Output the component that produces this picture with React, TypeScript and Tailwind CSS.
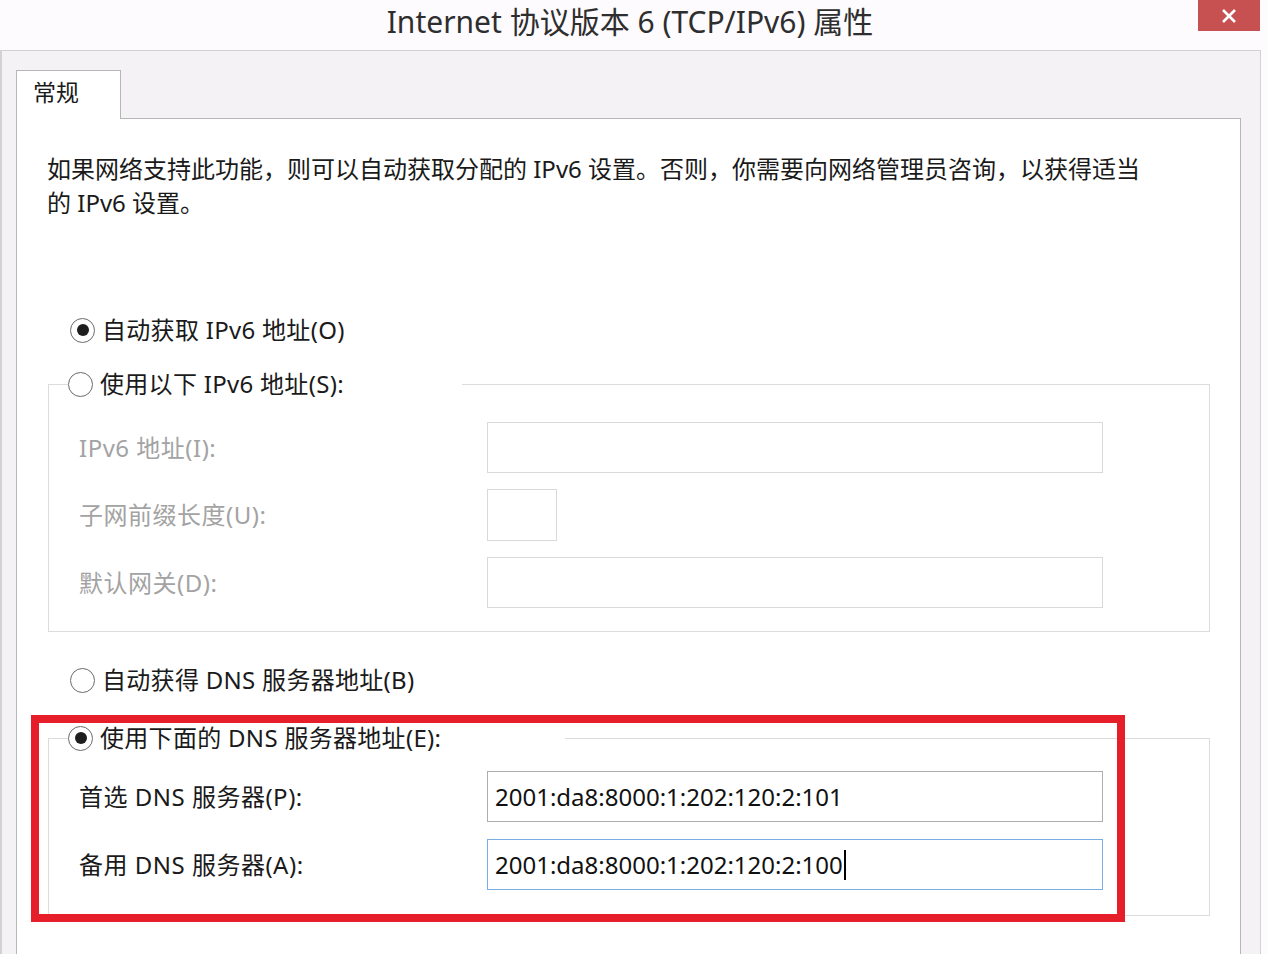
import React from 'react'

const FONT = { fontFamily: '"Noto Sans", "Noto Sans CJK SC", sans-serif' }

function Radio({ checked }: { checked?: boolean }) {
  return (
    <span className="w-[25px] h-[25px] rounded-full border-[1.5px] border-[#6b6b6b] bg-white flex items-center justify-center shrink-0">
      {checked && <span className="w-[12px] h-[12px] rounded-full bg-[#1e1e1e]" />}
    </span>
  )
}

function RadioRow({ label, checked }: { label: string; checked?: boolean }) {
  return (
    <div className="flex items-center gap-[7px] h-[34px] text-[24px] tracking-[0.3px] text-[#1a1a1a]">
      <Radio checked={checked} />
      <span className="leading-none">{label}</span>
    </div>
  )
}

function FieldRow({
  label,
  disabled,
  inputClass,
  value,
  caret,
}: {
  label: string
  disabled?: boolean
  inputClass: string
  value?: string
  caret?: boolean
}) {
  return (
    <div className="flex items-center">
      <div
        className={`w-[438px] pl-[30px] text-[24px] tracking-[0.5px] ${disabled ? 'text-[#a3a3a3]' : 'text-[#1a1a1a]'}`}
      >
        {label}
      </div>
      <div className={`h-[51px] bg-white border flex items-center pl-[7px] text-[24px] text-[#111] ${inputClass}`}>
        {value}
        {caret && <span className="inline-block w-[2px] h-[30px] bg-black ml-[1px]" />}
      </div>
    </div>
  )
}

export default function App() {
  return (
    <div className="relative w-[1268px] h-[954px] overflow-hidden bg-[#fdfbfd]" style={FONT}>
      {/* title bar */}
      <div className="relative w-[1260px] h-[50px] flex items-center justify-center">
        <span className="text-[30px] text-[#2e2e2e] pb-[8px]">Internet 协议版本 6 (TCP/IPv6) 属性</span>
        <div className="absolute top-0 right-0 w-[62px] h-[31px] bg-[#c75050] flex items-center justify-center">
          <svg width="16" height="14" viewBox="0 0 16 14">
            <path d="M2 1 L14 13 M14 1 L2 13" stroke="#fff" strokeWidth="2.6" />
          </svg>
        </div>
      </div>

      {/* dialog body */}
      <div className="w-[1261px] h-[904px] border-t border-l-2 border-r border-[#d3d1d4] bg-[#f4f2f5] pl-[14px] pt-[19px]">
        <div className="relative z-10 w-[105px] h-[49px] border border-b-0 border-[#b7b7b7] bg-white pl-[16px] pt-[4px] text-[23px] text-[#1a1a1a]">
          常规
        </div>
        <div className="-mt-px w-[1225px] h-[900px] border border-[#b7b7b7] bg-white">
          <p className="pl-[30px] pt-[33px] text-[24px] leading-[34px] text-[#1a1a1a] whitespace-nowrap">
            如果网络支持此功能，则可以自动获取分配的 IPv6 设置。否则，你需要向网络管理员咨询，以获得适当
            <br />
            的 IPv6 设置。
          </p>

          <div className="ml-[53px] mt-[93px]">
            <RadioRow label="自动获取 IPv6 地址(O)" checked />
          </div>

          <fieldset className="ml-[31px] mt-[20px] w-[1162px] h-[265px] border border-[#dcdcdc]">
            <legend className="ml-[19px] w-[394px]">
              <RadioRow label="使用以下 IPv6 地址(S):" />
            </legend>
            <div className="flex flex-col gap-[16px] pt-[21px]">
              <FieldRow label="IPv6 地址(I):" disabled inputClass="w-[616px] border-[#d9d9d9]" />
              <FieldRow label="子网前缀长度(U):" disabled inputClass="w-[70px] h-[52px] border-[#d9d9d9]" />
              <FieldRow label="默认网关(D):" disabled inputClass="w-[616px] border-[#d9d9d9]" />
            </div>
          </fieldset>

          <div className="ml-[53px] mt-[31px]">
            <RadioRow label="自动获得 DNS 服务器地址(B)" />
          </div>

          <fieldset className="ml-[31px] mt-[24px] w-[1162px] h-[195px] border border-[#dcdcdc]">
            <legend className="ml-[19px] w-[497px]">
              <RadioRow label="使用下面的 DNS 服务器地址(E):" checked />
            </legend>
            <div className="flex flex-col gap-[17px] pt-[16px]">
              <FieldRow
                label="首选 DNS 服务器(P):"
                inputClass="w-[616px] border-[#adadad]"
                value="2001:da8:8000:1:202:120:2:101"
              />
              <FieldRow
                label="备用 DNS 服务器(A):"
                inputClass="w-[616px] border-[#7aaee2]"
                value="2001:da8:8000:1:202:120:2:100"
                caret
              />
            </div>
          </fieldset>
        </div>
      </div>

      {/* red highlight */}
      <div className="absolute left-[31px] top-[715px] w-[1094px] h-[207px] border-[8px] border-[#e61e2a] pointer-events-none" />
    </div>
  )
}
